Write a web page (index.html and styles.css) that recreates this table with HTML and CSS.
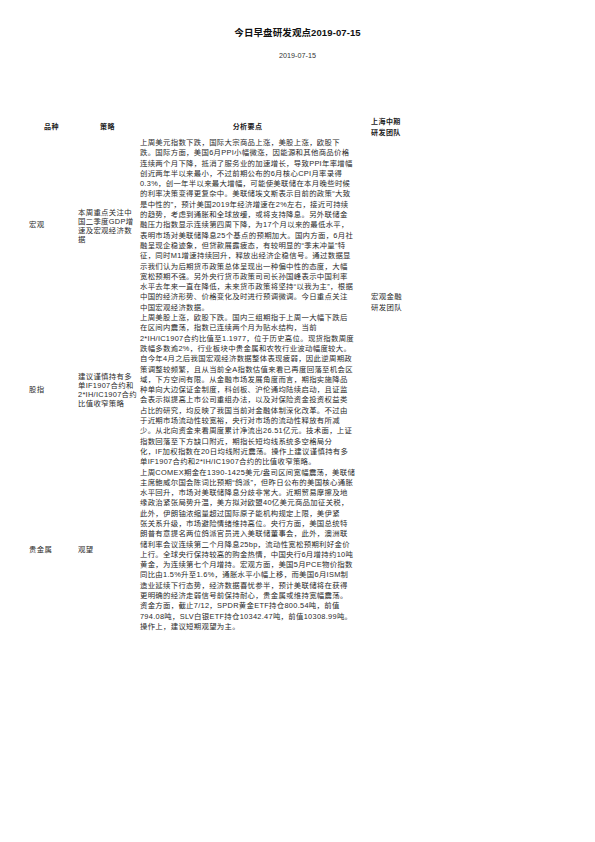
FILE: index.html
```html
<!DOCTYPE html>
<html lang="zh">
<head>
<meta charset="utf-8">
<title>今日早盘研发观点2019-07-15</title>
<link rel="stylesheet" href="styles.css">
</head>
<body>
<div class="page">
  <h1 class="title">今日早盘研发观点2019-07-15</h1>
  <div class="date">2019-07-15</div>
  <table class="report">
    <thead>
      <tr>
        <th class="c1">品种</th>
        <th class="c2">策略</th>
        <th class="c3">分析要点</th>
        <th class="c4">上海中期<br>研发团队</th>
      </tr>
    </thead>
    <tbody>
      <tr>
        <td class="c1">宏观</td>
        <td class="c2">本周重点关注中<br>国二季度GDP增<br>速及宏观经济数<br>据</td>
        <td class="c3">上周美元指数下跌，国际大宗商品上涨，美股上涨，欧股下<br>跌。国际方面，美国6月PPI小幅微涨，因能源和其他商品价格<br>连续两个月下降，抵消了服务业的加速增长，导致PPI年率增幅<br>创近两年半以来最小，不过前期公布的6月核心CPI月率录得<br>0.3%，创一年半以来最大增幅，可能使美联储在本月晚些时候<br>的利率决策变得更复杂中。美联储埃文斯表示目前的政策“大致<br>是中性的”，预计美国2019年经济增速在2%左右，接近可持续<br>的趋势，考虑到通胀和全球放缓，或将支持降息。另外联储金<br>融压力指数显示连续第四周下降，为17个月以来的最低水平，<br>表明市场对美联储降息25个基点的预期加大。国内方面，6月社<br>融呈现企稳迹象，但贷款展露疲态，有较明显的“季末冲量”特<br>征，同时M1增速持续回升，释放出经济企稳信号。通过数据显<br>示我们认为后期货币政策总体呈现出一种偏中性的态度，大幅<br>宽松预期不强。另外央行货币政策司司长孙国峰表示中国利率<br>水平去年来一直在降低，未来货币政策将坚持“以我为主”，根据<br>中国的经济形势、价格变化及时进行预调微调。今日重点关注<br>中国宏观经济数据。</td>
        <td class="c4" rowspan="2">宏观金融<br>研发团队</td>
      </tr>
      <tr>
        <td class="c1">股指</td>
        <td class="c2">建议谨慎持有多<br>单IF1907合约和<br>2*IH/IC1907合约<br>比值收窄策略</td>
        <td class="c3">上周美股上涨，欧股下跌。国内三组期指于上周一大幅下跌后<br>在区间内震荡，指数已连续两个月为贴水结构，当前<br>2*IH/IC1907合约比值至1.1977，位于历史高位。现货指数周度<br>跌幅多数逾2%，行业板块中贵金属和农牧行业波动幅度较大。<br>自今年4月之后我国宏观经济数据整体表现疲弱，因此逆周期政<br>策调整较频繁，且从当前全A指数估值来看已再度回落至机会区<br>域，下方空间有限。从金融市场发展角度而言，期指实施降品<br>种单向大边保证金制度，科创板、沪伦通均陆续启动，且证监<br>会表示拟提高上市公司重组办法，以及对保险资金投资权益类<br>占比的研究，均反映了我国当前对金融体制深化改革。不过由<br>于近期市场流动性较宽裕，央行对市场的流动性释放有所减<br>少。从北向资金来看周度累计净流出26.51亿元。技术面，上证<br>指数回落至下方缺口附近，期指长短均线系统多空格局分<br>化，IF加权指数在20日均线附近震荡。操作上建议谨慎持有多<br>单IF1907合约和2*IH/IC1907合约的比值收窄策略。</td>
      </tr>
      <tr>
        <td class="c1">贵金属</td>
        <td class="c2">观望</td>
        <td class="c3">上周COMEX期金在1390-1425美元/盎司区间宽幅震荡，美联储<br>主席鲍威尔国会陈词比预期“鸽派”，但昨日公布的美国核心通胀<br>水平回升，市场对美联储降息分歧非常大。近期贸易摩擦及地<br>缘政治紧张局势升温，美方拟对欧盟40亿美元商品加征关税，<br>此外，伊朗铀浓缩量超过国际原子能机构规定上限，美伊紧<br>张关系升级，市场避险情绪维持高位。央行方面，美国总统特<br>朗普有意提名两位鸽派官员进入美联储董事会，此外，澳洲联<br>储利率会议连续第二个月降息25bp，流动性宽松预期利好金价<br>上行。全球央行保持较高的购金热情，中国央行6月增持约10吨<br>黄金，为连续第七个月增持。宏观方面，美国5月PCE物价指数<br>同比由1.5%升至1.6%，通胀水平小幅上移，而美国6月ISM制<br>造业延续下行态势，经济数据喜忧参半，预计美联储将在获得<br>更明确的经济走弱信号前保持耐心，贵金属或维持宽幅震荡。<br>资金方面，截止7/12，SPDR黄金ETF持仓800.54吨，前值<br>794.08吨，SLV白银ETF持仓10342.47吨，前值10308.99吨。<br>操作上，建议短期观望为主。</td>
      </tr>
    </tbody>
  </table>
</div>
</body>
</html>
```

FILE: styles.css
```css
html, body {
  margin: 0;
  padding: 0;
  background: #ffffff;
}

body {
  font-family: "Liberation Sans", "Noto Sans CJK SC", sans-serif;
  color: #222222;
}

.page {
  width: 595px;
  padding-top: 27px;
}

.title {
  margin: 0;
  font-size: 9.5px;
  line-height: 12px;
  font-weight: bold;
  text-align: center;
  color: #111111;
  letter-spacing: 0.1px;
}

.date {
  margin-top: 12px;
  font-size: 7.2px;
  line-height: 10px;
  text-align: center;
  color: #333333;
}

.report {
  margin-top: 54px;
  margin-left: 29px;
  border-collapse: collapse;
  border-spacing: 0;
  table-layout: fixed;
}

.report th,
.report td {
  padding: 0;
  vertical-align: middle;
  text-align: left;
}

.report th {
  font-size: 7px;
  line-height: 11px;
  font-weight: bold;
  letter-spacing: 0.4px;
  text-align: center;
  height: 23px;
  color: #222222;
}

.report td {
  font-size: 7.4px;
  line-height: 10.3px;
  letter-spacing: 0.3px;
  white-space: nowrap;
  color: #2a2a2a;
}

.report td.c2 {
  line-height: 9px;
}

.c1 {
  width: 45px;
  padding-right: 4px !important;
}

.c2 {
  width: 53px;
  padding-right: 3px !important;
}

.c3 {
  width: 203px;
  padding-right: 16px !important;
}

.c4 {
  width: 33px;
}

.report th.c4 {
  text-align: left;
}
```
